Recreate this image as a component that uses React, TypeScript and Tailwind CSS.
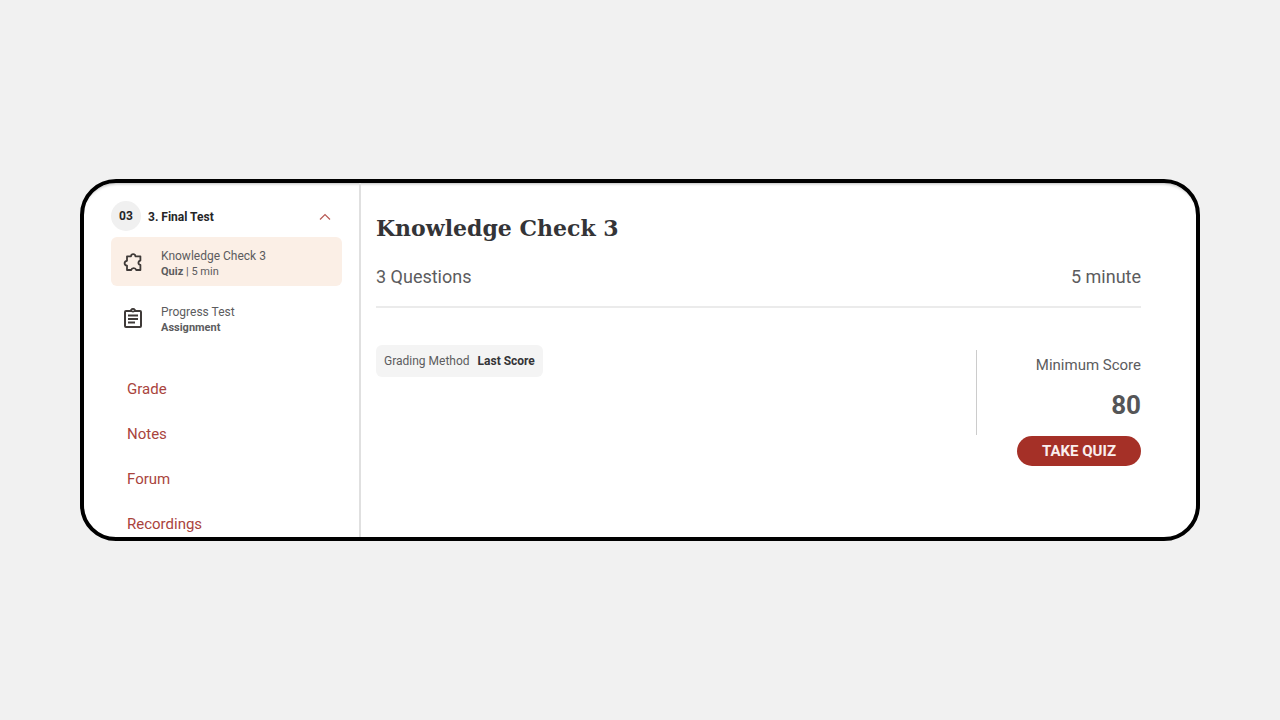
const links = ["Grade", "Notes", "Forum", "Recordings"];

function PuzzleIcon() {
  return (
    <svg viewBox="0 0 20 20" className="size-5 shrink-0" fill="none" stroke="#3f3a38" strokeWidth="1.8" strokeLinejoin="round" aria-hidden="true">
      <path d="M4 4.3H8C8.2 1.5 12.2 1.5 12.4 4.3H17.4V8.6C14.8 9 14.8 12.6 17.4 13V18H13.2C12.6 15.5 8.8 15.5 8.2 18H4V13.6C.8 13.2 .8 9.2 4 8.8Z" />
    </svg>
  );
}

function ClipboardIcon() {
  return (
    <svg viewBox="0 0 20 20" className="size-5 shrink-0" fill="none" stroke="#3f3a38" strokeWidth="2" aria-hidden="true">
      <rect x="2" y="3" width="16" height="16" rx="1" />
      <path d="M5 7.5H15M5 11H15M5 14.5H12" />
      <path d="M7 3A3 2.8 0 0 1 13 3Z" fill="#3f3a38" stroke="none" />
      <circle cx="10" cy="2.2" r="2.2" fill="#3f3a38" stroke="none" />
      <circle cx="10" cy="2.4" r=".7" fill="#ffffff" stroke="none" />
    </svg>
  );
}

export default function App() {
  return (
    <div className="flex min-h-screen items-center bg-[#f1f1f1] px-20 font-['Roboto','Liberation_Sans',sans-serif] text-[#5c5c5e]">
      <div className="flex h-[362px] w-full overflow-hidden rounded-[36px] border-4 border-black bg-white shadow-[inset_0_4px_3px_-3px_#bbbbbb]">
        <aside className="w-[277px] shrink-0 border-r-2 border-[#e0e0e0] pt-[18px] pr-[17px] pl-[27px]">
          <button type="button" className="flex h-[30px] w-full items-center text-left text-xs font-bold text-[#252527]">
            <span className="flex size-[30px] items-center justify-center rounded-full bg-[#f0f0f0]">03</span>
            <span className="ml-[7px] flex-1 pt-px">3. Final Test</span>
            <svg viewBox="0 0 12 8" className="mt-px mr-[11px] h-2 w-3" fill="none" stroke="#b85a55" strokeWidth="1.2" aria-hidden="true">
              <path d="M1 6.5 6 1.5 11 6.5" />
            </svg>
          </button>
          <a href="#quiz" className="mt-[6px] flex h-[49px] items-center rounded-md bg-[#fbefe6] pl-3">
            <PuzzleIcon />
            <span className="ml-[18px] pt-[5px]">
              <span className="block text-xs leading-4">Knowledge Check 3</span>
              <span className="block text-[11px] leading-4"><b>Quiz</b> | 5 min</span>
            </span>
          </a>
          <a href="#assignment" className="mt-[7px] flex h-[49px] items-center pl-3">
            <ClipboardIcon />
            <span className="ml-[18px] pt-[5px]">
              <span className="block text-xs leading-4">Progress Test</span>
              <b className="block text-[11px] leading-4">Assignment</b>
            </span>
          </a>
          <nav className="mt-[25px] flex flex-col pl-4 text-[15px] text-[#a9443d]">
            {links.map((l) => (
              <a key={l} href={"#" + l.toLowerCase()} className="h-[45px] shrink-0 leading-[44px]">{l}</a>
            ))}
          </nav>
        </aside>
        <main className="flex-1 pt-[29px] pr-[55px] pl-[15px]">
          <h1 className="font-['DejaVu_Serif',serif] text-[22px] leading-8 font-bold text-[#343437]">Knowledge Check 3</h1>
          <div className="mt-[11px] flex h-[53px] justify-between border-b-2 border-[#ebebeb] pt-2 text-lg leading-7">
            <span>3 Questions</span>
            <span>5 minute</span>
          </div>
          <section className="mt-[37px] flex items-start justify-between">
            <div className="flex h-8 items-center gap-2 rounded-md bg-[#f4f4f4] px-2 text-xs">
              <span>Grading Method</span>
              <b className="text-[#343437]">Last Score</b>
            </div>
            <div className="mt-[5px] w-[165px]">
              <div className="h-[85px] border-l border-[#cccccc] text-right">
                <p className="pt-[5px] text-[15px] leading-5">Minimum Score</p>
                <p className="mt-[14px] text-[26px] leading-8 font-bold text-[#555557]">80</p>
              </div>
              <button type="button" className="ml-auto mt-px block h-[30px] w-[124px] rounded-full bg-[#a53027] text-[15px] font-bold text-[#faeeee]">TAKE QUIZ</button>
            </div>
          </section>
        </main>
      </div>
    </div>
  );
}
